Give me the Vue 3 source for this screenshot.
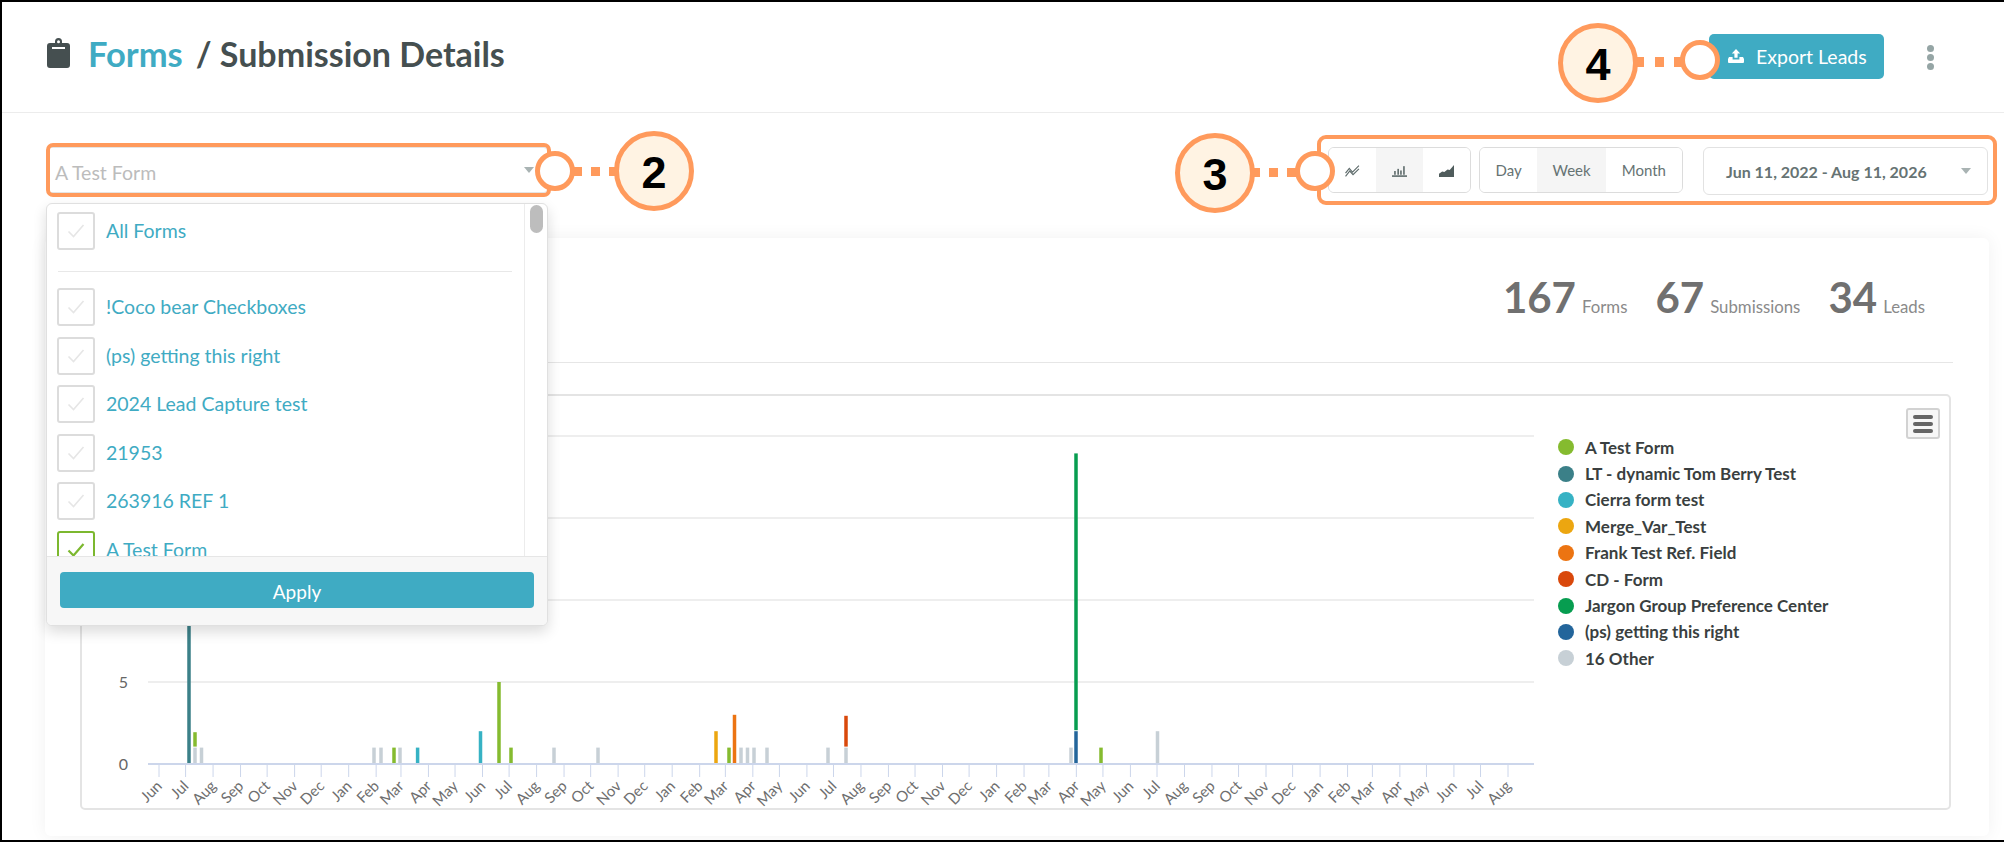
<script setup>
const items = [
  { label: '!Coco bear Checkboxes' },
  { label: '(ps) getting this right' },
  { label: '2024 Lead Capture test' },
  { label: '21953' },
  { label: '263916 REF 1' },
  { label: 'A Test Form', on: true },
]
const legend = [
  ['A Test Form', '#85bb2f'],
  ['LT - dynamic Tom Berry Test', '#3b8088'],
  ['Cierra form test', '#36b2c4'],
  ['Merge_Var_Test', '#eca610'],
  ['Frank Test Ref. Field', '#ec7412'],
  ['CD - Form', '#d9480b'],
  ['Jargon Group Preference Center', '#079d50'],
  ['(ps) getting this right', '#23659b'],
  ['16 Other', '#c7d0d6'],
]
const G = '#85bb2f', T = '#3b8088', CY = '#36b2c4', Y = '#eca610', O = '#ec7412', R = '#d9480b', J = '#079d50', B = '#23659b', X = '#c7d0d6'
const unit = 16.4
const base = 764
const raw = [
  [189, 0, 14, T], [195, 0, 1, X], [195, 1, 1, G], [201.5, 0, 1, X],
  [374, 0, 1, X], [381, 0, 1, X], [394, 0, 1, G], [400, 0, 1, X], [417.6, 0, 1, CY],
  [480.5, 0, 2, CY], [499, 0, 5, G], [511, 0, 1, G], [554, 0, 1, X], [598, 0, 1, X],
  [716, 0, 2, Y], [729, 0, 1, G], [734.5, 0, 3, O], [741, 0, 1, X], [747.5, 0, 1, X], [754, 0, 1, X],
  [767, 0, 1, X], [828, 0, 1, X], [846, 0, 1, X], [846, 1, 2, R],
  [1071, 0, 1, X], [1076, 0, 2, B], [1076, 2, 17, J], [1101, 0, 1, G], [1157.5, 0, 2, X],
]
const bars = raw.map(([x, from, n, color]) => ({
  x: x - 1.75,
  y: base - (from + n) * unit + (from > 0 ? 1 : 0),
  h: n * unit - (from > 0 ? 2 : 0),
  color,
}))
const grid = [436, 518, 600, 682]
const names = ['Jan', 'Feb', 'Mar', 'Apr', 'May', 'Jun', 'Jul', 'Aug', 'Sep', 'Oct', 'Nov', 'Dec']
const ticks = []
const start = Date.UTC(2022, 5, 1)
const end = Date.UTC(2026, 7, 1)
const k = (1508 - 159) / (end - start)
for (let i = 0; i < 51; i++) {
  const t = Date.UTC(2022, 5 + i, 1)
  ticks.push({ x: 159 + (t - start) * k, label: names[(5 + i) % 12] })
}
</script>

<template>
  <div class="page">
    <header class="head">
      <svg class="clip" viewBox="0 0 23 30">
        <path d="M3 5h5V3.6a3.5 3.5 0 0 1 7 0V5h5a3 3 0 0 1 3 3v19a3 3 0 0 1-3 3H3a3 3 0 0 1-3-3V8a3 3 0 0 1 3-3z" fill="#454f50" />
        <circle cx="11.5" cy="3.8" r="1.5" fill="#fff" />
        <rect x="5" y="9" width="13" height="2" fill="#fff" />
      </svg>
      <h1 class="title"><a class="crumb">Forms</a><span class="rest">/ Submission Details</span></h1>
      <button class="export">
        <svg class="up" viewBox="0 0 16 14">
          <path d="M8 0l4.2 4.6H9.6v4.2H6.4V4.6H3.8z" fill="#fff" />
          <path d="M1 8h3.6v2.4h6.8V8H15l1 2v3a1 1 0 0 1-1 1H1a1 1 0 0 1-1-1v-3z" fill="#fff" />
        </svg>
        Export Leads
      </button>
      <div class="kebab"><i></i><i></i><i></i></div>
    </header>

    <section class="tools">
      <div class="selectwrap">
        <div class="select">
          <span class="ph">A Test Form</span>
          <b class="caret"></b>
        </div>
        <div class="panel">
          <div class="listwrap">
            <div class="list">
              <label class="row">
                <span class="box"><svg viewBox="0 0 18 14"><path d="M1.5 7.5l5 5L16.5 1" /></svg></span>
                <span class="name">All Forms</span>
              </label>
              <div class="sep"></div>
              <label v-for="it in items" :key="it.label" class="row" :class="{ on: it.on }">
                <span class="box"><svg viewBox="0 0 18 14"><path d="M1.5 7.5l5 5L16.5 1" /></svg></span>
                <span class="name">{{ it.label }}</span>
              </label>
            </div>
            <div class="gutter"><div class="thumb"></div></div>
          </div>
          <div class="foot"><button class="apply">Apply</button></div>
        </div>
      </div>

      <div class="controls">
        <div class="group icons">
          <button class="cell">
            <svg viewBox="0 0 14 11" class="ci" fill="none" stroke="#5f6c6c" stroke-width="1.1">
              <path d="M.5 7.5L4 3l3 3.5L13 .5" />
              <path d="M.5 10.5L4.5 5.5l3 3.5L13 3.5" />
            </svg>
          </button>
          <button class="cell active">
            <svg viewBox="0 0 14 11" class="ci" fill="#5f6c6c">
              <rect x="2" y="5.5" width="1.5" height="3.5" />
              <rect x="5" y="3.5" width="1.5" height="5.5" />
              <rect x="7.6" y="5" width="1.5" height="4" />
              <rect x="10.4" y="1" width="1.5" height="8" />
              <rect x="0" y="9.5" width="14" height="1.5" />
            </svg>
          </button>
          <button class="cell">
            <svg viewBox="0 0 14 11" class="ci" fill="#4f5c5c">
              <path d="M0 11V8l3-2 2 .5L8 4l2 .5L14 0v11z" />
            </svg>
          </button>
        </div>
        <div class="group times">
          <button class="cell day">Day</button>
          <button class="cell week active">Week</button>
          <button class="cell month">Month</button>
        </div>
        <div class="range">
          <span>Jun 11, 2022 - Aug 11, 2026</span>
          <b class="caret"></b>
        </div>
      </div>
    </section>

    <main class="card">
      <div class="stats">
        <div class="stat"><strong>167</strong><span>Forms</span></div>
        <div class="stat"><strong>67</strong><span>Submissions</span></div>
        <div class="stat"><strong>34</strong><span>Leads</span></div>
      </div>
      <div class="chartcard">
        <svg class="plot" viewBox="82 396 1471 412" width="1471" height="412">
          <line v-for="g in grid" :key="g" x1="148" x2="1534" :y1="g" :y2="g" stroke="#e8e8e8" stroke-width="1.5" />
          <line v-for="t in ticks" :key="t.x" :x1="t.x" :x2="t.x" y1="764" y2="777" stroke="#ccd6eb" stroke-width="1" />
          <rect v-for="(b, i) in bars" :key="i" :x="b.x" :y="b.y" width="3.5" :height="b.h" :fill="b.color" />
          <line x1="148" x2="1534" y1="764" y2="764" stroke="#ccd6eb" stroke-width="2" />
          <text x="128" y="688" class="yl" text-anchor="end">5</text>
          <text x="128" y="770" class="yl" text-anchor="end">0</text>
          <text
            v-for="t in ticks"
            :key="t.label + t.x"
            class="xl"
            text-anchor="end"
            :transform="`translate(${t.x + 4} 787) rotate(-45)`"
          >{{ t.label }}</text>
        </svg>
        <ul class="legend">
          <li v-for="[name, color] in legend" :key="name">
            <i class="dot" :style="{ background: color }"></i>{{ name }}
          </li>
        </ul>
        <button class="menu"><i></i><i></i><i></i></button>
      </div>
    </main>

    <!-- annotations -->
    <div class="frame f2"></div>
    <div class="frame f3"></div>
    <div class="ring r2"></div>
    <div class="ring r3"></div>
    <div class="ring r4"></div>
    <div class="link l2"><i></i><i></i><i></i></div>
    <div class="link l3"><i></i><i></i><i></i></div>
    <div class="link l4"><i></i><i></i><i></i></div>
    <div class="badge b2">2</div>
    <div class="badge b3">3</div>
    <div class="badge b4">4</div>
  </div>
</template>

<style>
html, body { margin: 0; background: #fff; }
</style>

<style scoped>
* { box-sizing: border-box; }
.page {
  position: relative;
  width: 2004px;
  height: 842px;
  overflow: hidden;
  padding: 2px 0 2px 2px;
  background: #fff;
  font-family: Lato, "Liberation Sans", sans-serif;
  color: #454f50;
  display: flex;
  flex-direction: column;
  box-shadow: inset 2px 2px 0 #000, inset 0 -2px 0 #000;
}
button { font-family: inherit; cursor: pointer; }

.head {
  height: 111px;
  flex: none;
  display: flex;
  align-items: center;
  padding: 0 70px 0 45px;
  border-bottom: 1px solid #ececec;
}
.clip { width: 23px; height: 30px; margin-top: -8px; flex: none; }
.title { margin: -6px 0 0 18px; font-size: 34.5px; font-weight: 700; line-height: 40px; letter-spacing: 0; }
.crumb { color: #3fabc3; }
.rest { margin-left: 13px; color: #454f50; font-size: 34px; }
.export {
  margin-left: auto;
  margin-top: -2px;
  width: 175px;
  height: 45px;
  border: 0;
  border-radius: 5px;
  background: #3fabc3;
  color: #fff;
  font-size: 19.5px;
  display: flex;
  align-items: center;
  padding: 0 0 0 19px;
  gap: 12px;
}
.up { width: 16px; height: 14px; }
.kebab { margin-left: 43px; width: 7px; margin-top: 1px; display: flex; flex-direction: column; gap: 1.8px; }
.kebab i { display: block; width: 7px; height: 7px; border-radius: 50%; background: #95a5a5; }

.tools {
  height: 125px;
  flex: none;
  padding: 34px 16px 0 45px;
  display: flex;
  justify-content: space-between;
  align-items: flex-start;
}
.selectwrap { position: relative; width: 501px; }
.select {
  height: 46px;
  background: #fff;
  border: 1px solid #e4e4e4;
  border-radius: 4px;
  display: flex;
  align-items: center;
  justify-content: space-between;
  padding: 0 13px 0 7px;
  font-size: 19.5px;
  color: #bcbcbc;
}
.ph { margin-top: 5px; }
.caret {
  display: block;
  width: 0;
  height: 0;
  border-left: 5.5px solid transparent;
  border-right: 5.5px solid transparent;
  border-top: 6px solid #a9b3b3;
}
.panel {
  position: absolute;
  z-index: 5;
  left: -1px;
  top: 56px;
  width: 502px;
  height: 423px;
  border: 1px solid #e0e0e0;
  border-radius: 6px;
  background: #fff;
  box-shadow: 0 6px 14px rgba(0, 0, 0, 0.14);
  display: flex;
  flex-direction: column;
  overflow: hidden;
}
.listwrap { flex: 1; min-height: 0; display: flex; }
.list { flex: 1; overflow: hidden; padding: 8px 12px 0 10px; }
.gutter { width: 23px; flex: none; border-left: 1px solid #ececec; padding: 1px 4px 0 5px; }
.thumb { height: 28px; border-radius: 7px; background: #bdbdbd; }
.row { display: flex; align-items: center; gap: 11px; height: 38px; margin-bottom: 10.6px; }
.box {
  width: 38px;
  height: 38px;
  flex: none;
  border: 2px solid #dcdcdc;
  border-radius: 3px;
  display: flex;
  align-items: center;
  justify-content: center;
}
.box svg { width: 18px; height: 14px; fill: none; stroke: #e6e6e6; stroke-width: 1.6; }
.on .box { border-color: #7cb82f; }
.on .box svg { stroke: #7cb82f; stroke-width: 2.2; }
.name { font-size: 19.5px; color: #3fabc3; margin-top: -1px; }
.sep { height: 1px; background: #e8e8e8; margin: 21px 0 16px 1px; }
.foot {
  height: 69px;
  flex: none;
  background: #f7f7f7;
  border-top: 1px solid #e6e6e6;
  padding: 15px 13px 0 13px;
}
.apply {
  display: block;
  width: 100%;
  height: 36px;
  border: 0;
  border-radius: 4px;
  background: #3fabc3;
  color: #fff;
  font-size: 19px;
  padding: 2px 0 0;
}

.controls { display: flex; align-items: flex-start; }
.group {
  display: flex;
  height: 46px;
  border: 1px solid #dcdcdc;
  border-radius: 6px;
  overflow: hidden;
  background: #fff;
}
.cell {
  border: 0;
  background: #fff;
  padding: 0;
  display: flex;
  align-items: center;
  justify-content: center;
  color: #667373;
  font-size: 15px;
}
.cell.active { background: #f5f5f5; }
.icons { width: 143px; }
.icons .cell { width: 47.33px; }
.ci { width: 15px; height: 12px; margin-top: 1px; }
.times { width: 204px; margin-left: 8px; }
.day { width: 58px; }
.week { width: 69px; }
.month { width: 77px; }
.range {
  margin-left: 20px;
  width: 285px;
  height: 48px;
  border: 1px solid #e2e2e2;
  border-radius: 6px;
  background: #fff;
  display: flex;
  align-items: center;
  justify-content: space-between;
  padding: 0 16px 0 22px;
  font-size: 16px;
  font-weight: 700;
  color: #667373;
}

.card {
  flex: none;
  height: 598px;
  margin: 0 15px 0 43px;
  padding: 0 36px;
  background: #fff;
  border-radius: 6px;
  box-shadow: 0 0 18px rgba(0, 0, 0, 0.06);
}
.stats {
  height: 125px;
  border-bottom: 1px solid #e6e6e6;
  display: flex;
  justify-content: flex-end;
  align-items: baseline;
  gap: 28px;
  padding: 34px 28px 0 0;
}
.stat { display: flex; align-items: baseline; gap: 6px; }
.stat strong { font-size: 42px; line-height: 50px; font-weight: 700; color: #707070; }
.stat span { font-size: 16.8px; color: #8a8a8a; }
.chartcard {
  position: relative;
  width: 1871px;
  height: 416px;
  margin: 31px 0 0 -1px;
  border: 2px solid #e4e4e4;
  border-radius: 5px;
  display: flex;
}
.plot { flex: none; display: block; }
.yl { font: 16px Lato, sans-serif; fill: #666; }
.xl { font: 15px Lato, sans-serif; fill: #6e6e6e; }
.legend {
  list-style: none;
  margin: 0 0 0 5px;
  padding: 38px 0 0;
}
.legend li {
  height: 26.4px;
  display: flex;
  align-items: center;
  font-size: 17px;
  font-weight: 700;
  color: #3a3f40;
  white-space: nowrap;
}
.dot { width: 16px; height: 16px; border-radius: 50%; margin-right: 11px; flex: none; }
.menu {
  position: absolute;
  top: 12px;
  right: 9px;
  width: 34px;
  height: 31px;
  padding: 0 5px;
  background: #f7f7f7;
  border: 2px solid #d2d2d2;
  border-radius: 3px;
  display: flex;
  flex-direction: column;
  justify-content: center;
  gap: 3px;
}
.menu i { display: block; height: 4px; border-radius: 2px; background: #666; }

/* annotations */
.frame { position: absolute; z-index: 10; border: 4px solid #ff9a5c; border-radius: 7px; pointer-events: none; }
.f2 { left: 46px; top: 143px; width: 505px; height: 54px; }
.f3 { left: 1317px; top: 135px; width: 680px; height: 70px; border-radius: 9px; }
.ring {
  position: absolute;
  z-index: 11;
  width: 40px;
  height: 40px;
  border-radius: 50%;
  border: 5px solid #ff9a5c;
  background: #fff;
}
.r2 { left: 535px; top: 151px; }
.r3 { left: 1295px; top: 151px; }
.r4 { left: 1680px; top: 40px; }
.link { position: absolute; z-index: 10; display: flex; justify-content: space-between; height: 9px; }
.link i { display: block; width: 9px; background: #ff9a5c; }
.l2 { left: 573px; top: 167px; width: 45px; }
.l3 { left: 1251px; top: 168px; width: 45px; }
.l4 { left: 1635px; top: 57px; width: 48px; height: 10px; }
.badge {
  position: absolute;
  z-index: 12;
  width: 80px;
  height: 80px;
  border-radius: 50%;
  border: 5px solid #ff9a5c;
  background: #fff3e3;
  color: #000;
  font-family: "Liberation Sans", Arial, sans-serif;
  font-weight: 700;
  font-size: 45px;
  padding-top: 3px;
  display: flex;
  align-items: center;
  justify-content: center;
}
.b2 { left: 614px; top: 131px; }
.b3 { left: 1175px; top: 133px; }
.b4 { left: 1558px; top: 23px; }
</style>
